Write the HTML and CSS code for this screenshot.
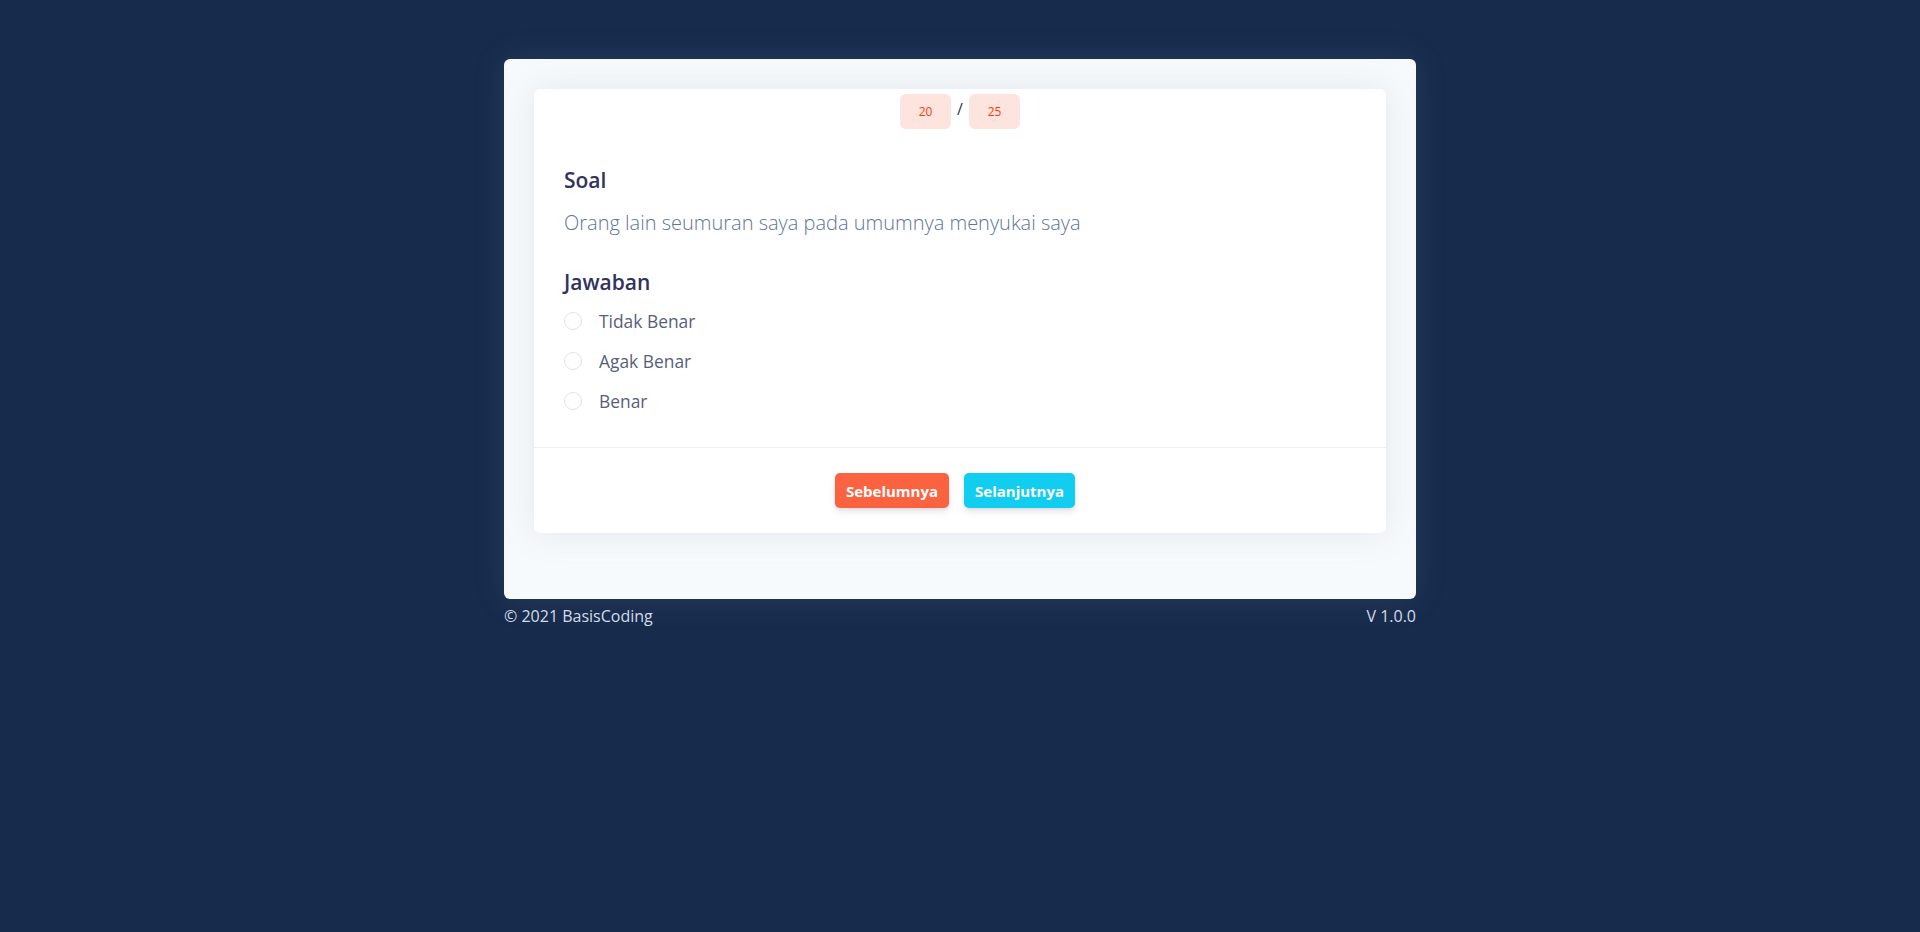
FILE: index.html
```html
<!DOCTYPE html>
<html lang="id">
<head>
<meta charset="utf-8">
<title>Soal</title>
<link rel="stylesheet" href="styles.css">
</head>
<body>
<div class="wrap">
  <div class="outer">
    <div class="card">
      <div class="counter">
        <span class="badge">20</span>
        <span class="slash">/</span>
        <span class="badge">25</span>
      </div>
      <div class="card-body">
        <h3 class="title">Soal</h3>
        <p class="question">Orang lain seumuran saya pada umumnya menyukai saya</p>
        <h3 class="title title-answer">Jawaban</h3>
        <div class="options">
          <label class="option"><span class="radio"></span><span class="opt-text">Tidak Benar</span></label>
          <label class="option"><span class="radio"></span><span class="opt-text">Agak Benar</span></label>
          <label class="option"><span class="radio"></span><span class="opt-text">Benar</span></label>
        </div>
      </div>
      <div class="card-footer">
        <button class="btn btn-prev">Sebelumnya</button>
        <button class="btn btn-next">Selanjutnya</button>
      </div>
    </div>
  </div>
  <div class="footer">
    <span>© 2021 BasisCoding</span>
    <span>V 1.0.0</span>
  </div>
</div>
</body>
</html>
```

FILE: styles.css
```css
html, body {
  margin: 0;
  padding: 0;
}
body {
  background: #172b4d;
  font-family: "Open Sans", "Liberation Sans", sans-serif;
  color: #525f7f;
  min-height: 932px;
}
.wrap {
  width: 912px;
  margin: 59px auto 0;
}
.outer {
  background: #f7fafc;
  border-radius: 6px;
  padding: 30px 30px 66px;
  box-shadow: 0 0 2rem 0 rgba(136, 152, 170, 0.15);
}
.card {
  background: #fff;
  border-radius: 6px;
  box-shadow: 0 0 2rem 0 rgba(136, 152, 170, 0.18);
}
.counter {
  display: flex;
  justify-content: center;
  align-items: center;
  padding-top: 5px;
  height: 35px;
}
.badge {
  display: flex;
  align-items: center;
  justify-content: center;
  width: 51px;
  height: 35px;
  border-radius: 6px;
  background: #fee4de;
  color: #ff3709;
  font-size: 12px;
}
.slash {
  width: 18px;
  text-align: center;
  color: #32325d;
  font-size: 16px;
  line-height: 1;
  margin-top: -6px;
}
.card-body {
  padding: 0 30px 25px;
}
.title {
  margin: 36px 0 0;
  font-size: 21px;
  font-weight: 600;
  line-height: 30px;
  color: #32325d;
}
.title-answer {
  margin-top: 29px;
}
.question {
  margin: 13px 0 0;
  font-size: 20px;
  font-weight: 300;
  line-height: 30px;
  color: #62749a;
}
.options {
  margin-top: 4px;
  margin-bottom: 1px;
}
.option {
  display: flex;
  align-items: center;
  height: 40px;
}
.radio {
  box-sizing: border-box;
  width: 18px;
  height: 18px;
  border: 1px solid #dfe3e8;
  border-radius: 50%;
  background: #fff;
  margin-right: 17px;
}
.opt-text {
  font-size: 17.4px;
  color: #585f7a;
}
.card-footer {
  border-top: 1px solid #eceff2;
  padding: 25px 10px 25px 0;
  display: flex;
  justify-content: center;
  gap: 15px;
}
.btn {
  height: 35px;
  border: none;
  border-radius: 5px;
  padding: 0 11px;
  font-family: "Open Sans", "Liberation Sans", sans-serif;
  font-size: 15px;
  font-weight: 700;
  letter-spacing: 0;
  color: #fff;
  box-shadow: 0 4px 6px rgba(50, 50, 93, 0.11), 0 1px 3px rgba(0, 0, 0, 0.08);
}
.btn-prev {
  background: #fb6340;
}
.btn-next {
  background: #11cdef;
}
.footer {
  display: flex;
  justify-content: space-between;
  margin-top: 5px;
  font-size: 16px;
  line-height: 24px;
  color: #d3dbe6;
}
```
